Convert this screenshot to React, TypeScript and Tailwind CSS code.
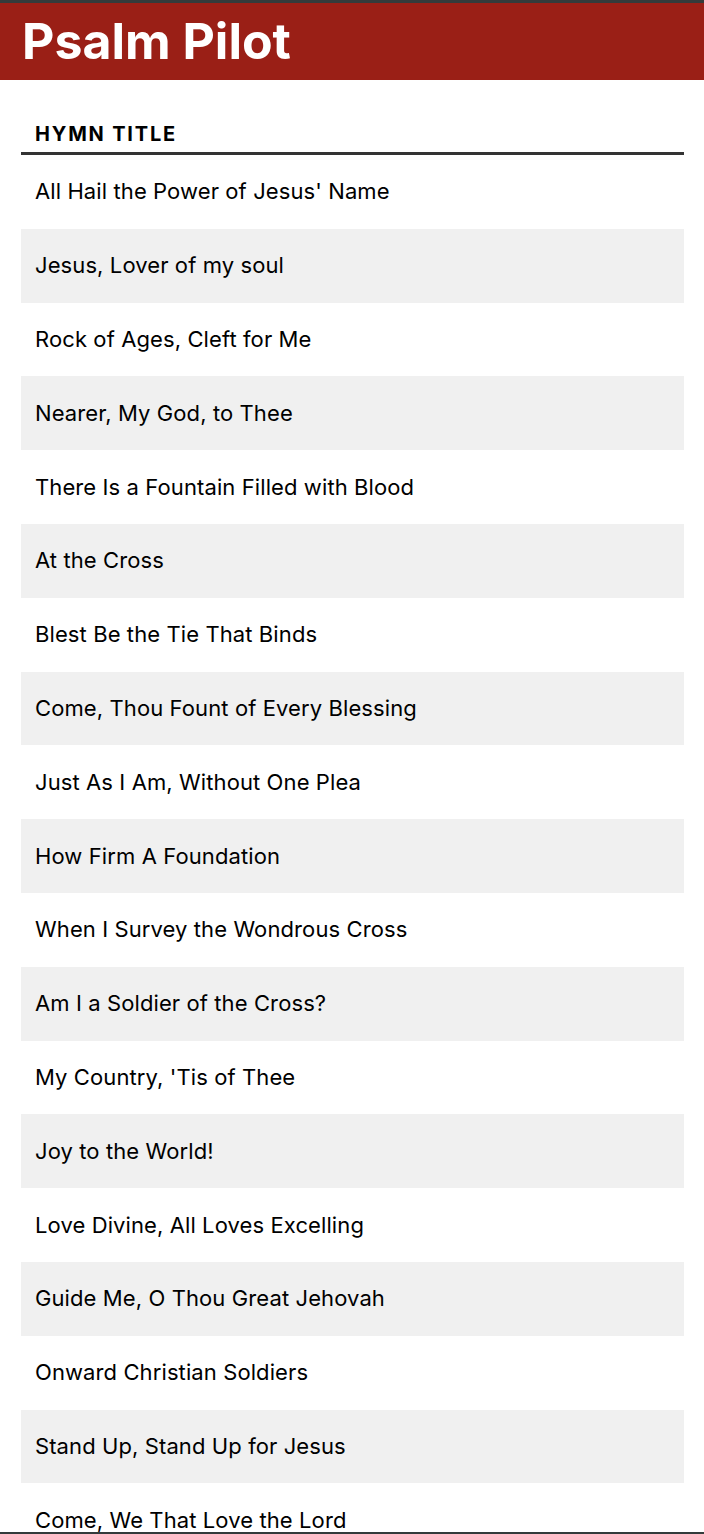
import React from "react";

const hymns = [
  "All Hail the Power of Jesus' Name",
  "Jesus, Lover of my soul",
  "Rock of Ages, Cleft for Me",
  "Nearer, My God, to Thee",
  "There Is a Fountain Filled with Blood",
  "At the Cross",
  "Blest Be the Tie That Binds",
  "Come, Thou Fount of Every Blessing",
  "Just As I Am, Without One Plea",
  "How Firm A Foundation",
  "When I Survey the Wondrous Cross",
  "Am I a Soldier of the Cross?",
  "My Country, 'Tis of Thee",
  "Joy to the World!",
  "Love Divine, All Loves Excelling",
  "Guide Me, O Thou Great Jehovah",
  "Onward Christian Soldiers",
  "Stand Up, Stand Up for Jesus",
  "Come, We That Love the Lord",
];

export default function App() {
  return (
    <div className="min-h-screen bg-white font-['Inter',sans-serif] text-black">
      {/* Header */}
      <header className="border-t-[3px] border-[#333b3b] bg-[#9a1f16] h-[80px] px-[22px] flex items-center">
        <h1 className="text-[50px] font-bold text-white leading-none pb-[1px]">
          Psalm Pilot
        </h1>
      </header>

      {/* Hymn table */}
      <div className="px-[21px] pt-[40px] pr-[20px]">
        <div className="border-b-[3px] border-[#333333] h-[35px] px-[14px] flex items-start">
          <span className="text-[20px] font-bold uppercase leading-none tracking-[1.8px] pt-[4px]">
            Hymn Title
          </span>
        </div>
        <ul>
          {hymns.map((h, i) => (
            <li
              key={h}
              className={
                "h-[73.8px] px-[14px] flex items-center text-[22px] tracking-[0.1px] " +
                (i % 2 === 1 ? "bg-[#f0f0f0]" : "bg-white")
              }
            >
              {h}
            </li>
          ))}
        </ul>
      </div>

      {/* window bottom edge */}
      <div className="fixed bottom-0 left-0 right-0 h-[2px] bg-[#333b3b]" />
    </div>
  );
}
